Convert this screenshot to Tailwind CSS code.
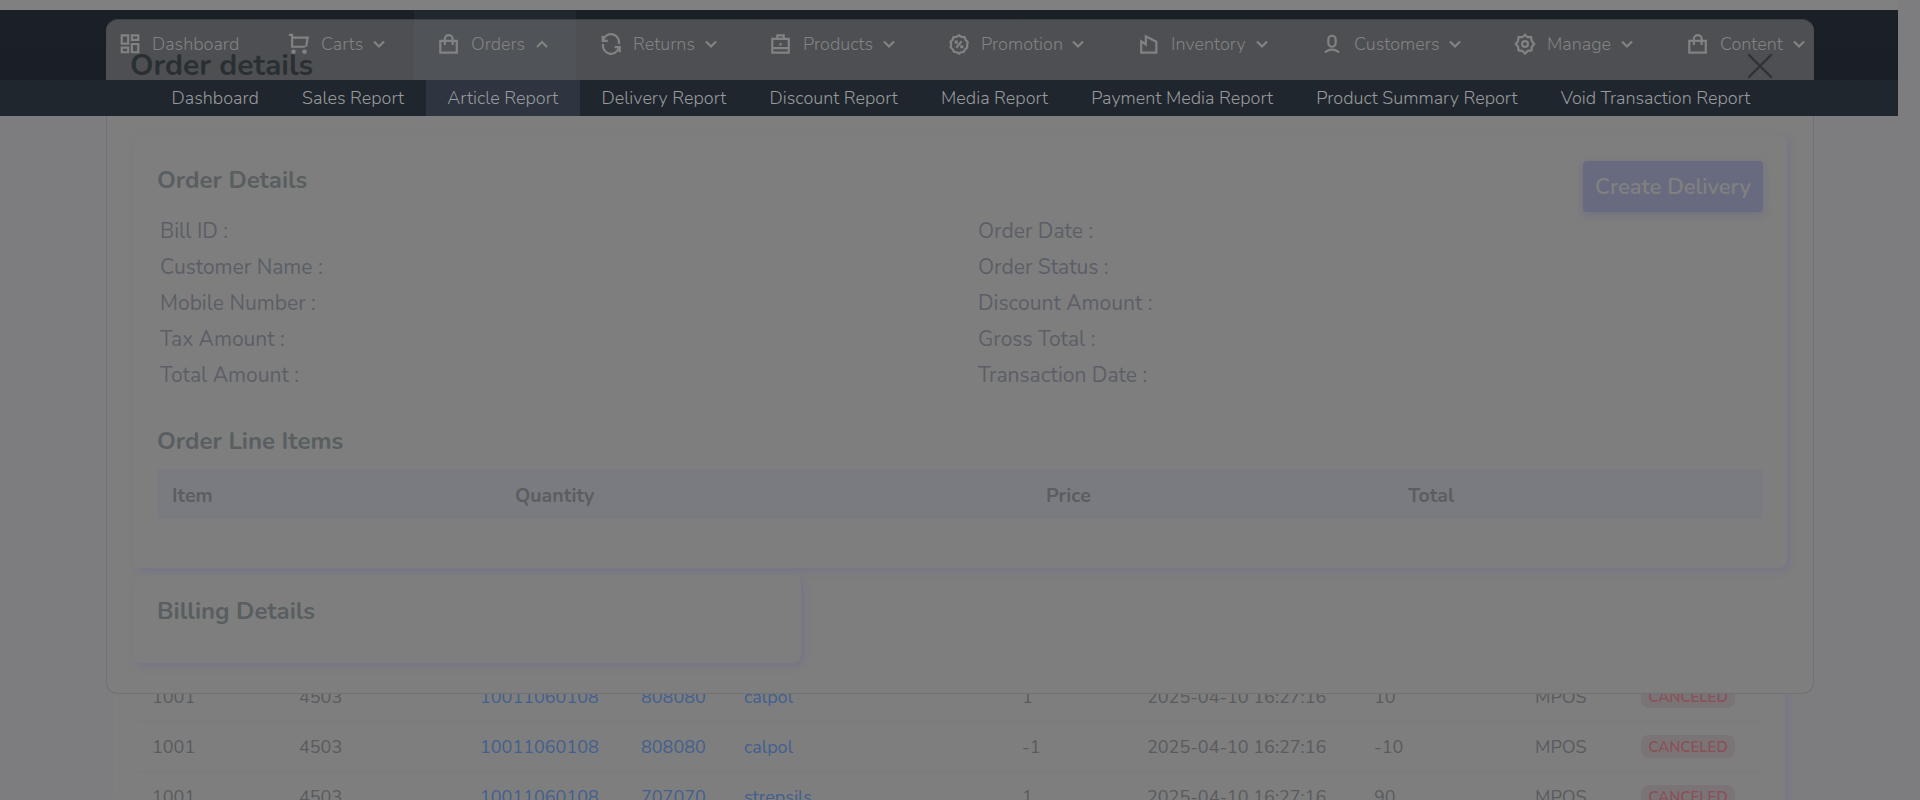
<!DOCTYPE html>
<html lang="en">
<head>
<meta charset="utf-8">
<title>Order details</title>
<script src="https://cdn.jsdelivr.net/npm/@tailwindcss/browser@4"></script>
</head>
<body class="relative h-[800px] w-[1920px] overflow-hidden bg-[#7d7d80] font-['Nunito','Lato',sans-serif] text-[18px] leading-none text-[#595b5f] whitespace-nowrap">

<div class="h-[10px] w-[1898px] bg-[#808080]"></div>
<nav class="h-[70px] w-[1898px] bg-linear-to-b from-[#1b2027] to-[#1a1e26] pl-[119px] font-light text-[#838485]">
  <div id="nav" class="flex h-full"></div>
</nav>

<!-- list behind the dialog -->
<main class="ml-[113px] mt-[36px] h-[684px] w-[1672px] overflow-hidden bg-[#7e7e7e] px-[24px] pt-[555px] shadow-[3px_0_6px_#76768a]">
  <div id="rows"></div>
</main>

<!-- dialog -->
<section class="absolute left-[106px] top-[19px] flex h-[675px] w-[1708px] flex-col">
  <header class="flex h-[97px] shrink-0 items-start justify-between rounded-t-xl border-t border-[#404144] bg-[#7f7f7f]/50 pl-[24px] pr-[41px]">
    <h1 class="pt-[31px] text-[30px] font-bold text-[#2a3032]">Order details</h1>
    <svg class="mt-[33px] size-[26px]" viewBox="0 0 26 26" fill="none" stroke="#303236" stroke-width="2.4" stroke-linecap="round"><path d="M2 2 24 24M24 2 2 24"/></svg>
  </header>
  <div class="grow rounded-b-xl border-x border-b border-[#717172] bg-[#7e7e7e] pl-[26px] pt-[19px]">
    <div class="h-[433px] w-[1654px] rounded-lg bg-[#7e7e7e] px-[24px] pt-[26px] shadow-[3px_3px_7px_#757588]">
      <div class="flex h-[51px] items-start justify-between">
        <h2 class="pt-[7px] text-[24px] font-bold text-[#595e61]">Order Details</h2>
        <button class="h-[51px] w-[180px] rounded bg-[#686b80] text-[22px] font-semibold text-[#80817f] shadow-[0_3px_8px_#707182]">Create Delivery</button>
      </div>
      <div class="mt-[1px] grid grid-cols-[818px_1fr] pl-[3px] text-[21px] leading-[36px] text-[#5c5e67]">
        <div>Bill ID :</div><div>Order Date :</div>
        <div>Customer Name :</div><div>Order Status :</div>
        <div>Mobile Number :</div><div>Discount Amount :</div>
        <div>Tax Amount :</div><div>Gross Total :</div>
        <div>Total Amount :</div><div>Transaction Date :</div>
      </div>
      <h2 class="mt-[36px] text-[24px] font-bold text-[#595e61]">Order Line Items</h2>
      <div class="mt-[16px] grid h-[50px] w-[1606px] grid-cols-[343px_531px_362px_1fr] items-center bg-[#7a7b80] pl-[15px] pt-[3px] text-[19.5px] font-bold text-[#5c5d60]">
        <div>Item</div><div>Quantity</div><div>Price</div><div>Total</div>
      </div>
    </div>
    <div class="mt-[7px] h-[88px] w-[668px] rounded-lg bg-[#7e7e7e] px-[24px] pt-[24px] shadow-[3px_3px_7px_#757588]">
      <h2 class="text-[24px] font-bold text-[#595e61]">Billing Details</h2>
    </div>
  </div>
</section>

<!-- report submenu, opened over the page -->
<div class="absolute left-0 top-[80px] flex h-[36px] w-[1898px] items-center bg-[#20262e] pl-[150px] font-light text-[#989a9b]">
  <div class="px-[21.6px]">Dashboard</div>
  <div class="px-[21.6px]">Sales Report</div>
  <div class="flex h-full items-center bg-[#2e3440] px-[21.6px]">Article Report</div>
  <div class="px-[21.6px]">Delivery Report</div>
  <div class="px-[21.6px]">Discount Report</div>
  <div class="px-[21.6px]">Media Report</div>
  <div class="px-[21.6px]">Payment Media Report</div>
  <div class="px-[21.6px]">Product Summary Report</div>
  <div class="px-[21.6px]">Void Transaction Report</div>
</div>

<script>
const icons = {
  grid: '<path d="M3 2.500h7v9H3zM14 2.500h7v5h-7zM14 12h7v9h-7zM3 16h7v5H3z"/>',
  cart: '<path d="M1 2h3.500v13H18.500M4.500 5H21.500l-1.800 10"/><circle cx="6" cy="20.500" r="1.300"/><circle cx="18" cy="20.500" r="1.300"/>',
  bag: '<path d="M2.500 8.500h18v13H2.500zM7.500 13V6.500a4.200 4.200 0 0 1 8.500 0V13"/>',
  sync: '<path d="M3 3v5.500h5.500M3.500 8A8.500 8.500 0 0 1 20.500 12M21.500 21v-5.500H16M20.500 16A8.500 8.500 0 0 1 3.500 12"/>',
  box: '<path d="M2.500 6.500h18V21.500H2.500zM8 6V2.500h7V6M2.500 16.500h18M11.500 11v2.500"/>',
  promo: '<path d="M12 2.500 14.800 4.300 18 4.500 19.200 7.600 21.500 10 20.800 13 21 16 18.500 18 17 20.800 14 21 12 22.500 9.500 21 6.500 20.500 5.200 17.800 2.800 15.500 3.500 12.500 2.800 9.500 5 7.500 6 4.500 9.200 4.300zM15 9l-6 7"/><circle cx="9" cy="10" r=".8"/><circle cx="15" cy="15" r=".8"/>',
  inv: '<path d="M3.500 21.500V9l5 3.500V3.500L20 9.500V21.500z"/>',
  user: '<rect x="8" y="3" width="8" height="12" rx="4"/><path d="M4.500 21.500c3-4.500 12-4.500 15 0"/>',
  gear: '<path d="M12 2 14.600 4.600 18.800 4.500 19.200 8.500 22 12 19.500 15 19 19 15 19.500 12 22.500 9 19.500 5 19 4.500 15 2 12 4.500 8.500 5 4.500 9.400 4.600z"/><circle cx="12" cy="12" r="3.200"/>'
};
const items = [
  ['grid','Dashboard',169,87],['cart','Carts',150,41],['bag','Orders',162,54],['sync','Returns',170,61],
  ['box','Products',178,69],['promo','Promotion',190,80],['inv','Inventory',183,74],['user','Customers',193,84],
  ['gear','Manage',173,63],['bag','Content',160,62]];
document.getElementById('nav').innerHTML = items.map(([ic, label, w, tw], i) => `
  <div class="relative shrink-0 pt-[22px]" style="width:${w}px">
    ${label === 'Orders' ? '<div class="absolute inset-y-0 -left-[24px] w-[162px] bg-[#20272e]"></div>' : ''}
    <div class="relative flex h-[24px] items-center">
      <svg class="size-[22px] shrink-0" viewBox="0 0 24 24" fill="none" stroke="currentColor" stroke-width="2.4">${icons[ic]}</svg>
      <div class="mx-[11px]" style="width:${tw}px">${label}</div>
      ${i ? `<svg class="size-[12px] shrink-0" viewBox="0 0 12 12" fill="none" stroke="currentColor" stroke-width="2.2"><path d="${label === 'Orders' ? 'M1 9l5-5 5 5' : 'M1 3.500l5 5 5-5'}"/></svg>` : ''}
    </div>
  </div>`).join('');
const rows = [['808080','calpol','1','10'],['808080','calpol','-1','-10'],['707070','strepsils','1','90']];
document.getElementById('rows').innerHTML = rows.map(([art, name, qty, sum]) => `
  <div class="grid h-[50px] grid-cols-[147px_181px_161px_103px_278px_125px_227px_161px_106px_1fr] items-center border-t border-[#7a7a7b] pl-[15px] text-[#595b5f]">
    <div>1001</div><div>4503</div>
    <div class="text-[#425f8f]">10011060108</div>
    <div class="text-[#425f8f]">${art}</div>
    <div class="text-[#425f8f]">${name}</div>
    <div>${qty}</div><div>2025-04-10 16:27:16</div><div>${sum}</div>
    <div>MPOS</div>
    <div><div class="flex h-[23px] w-[94px] items-center justify-center rounded-lg bg-[#7b7476] pt-px text-[15px] font-semibold text-[#8a5058]">CANCELED</div></div>
  </div>`).join('');
</script>
</body>
</html>
